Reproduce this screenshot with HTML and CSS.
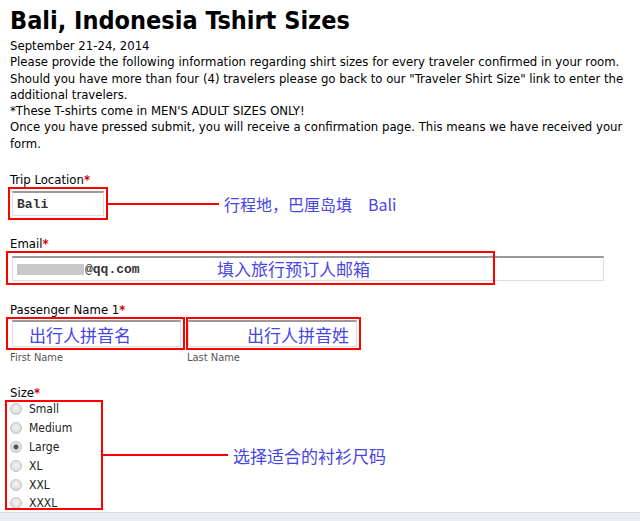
FILE: index.html
```html
<!DOCTYPE html>
<html lang="en">
<head>
  <meta charset="UTF-8">
  <title>Bali, Indonesia Tshirt Sizes</title>
  <link rel="stylesheet" href="styles.css">
</head>
<body>

  <div id="page">
    <h1>Bali, Indonesia Tshirt Sizes</h1>

    <div class="intro">
      September 21-24, 2014<br>
      Please provide the following information regarding shirt sizes for every traveler confirmed in your room.
      Should you have more than four (4) travelers please go back to our "Traveler Shirt Size" link to enter the
      additional travelers.<br>
      *These T-shirts come in MEN'S ADULT SIZES ONLY!<br>
      Once you have pressed submit, you will receive a confirmation page. This means we have received your
      form.
    </div>

    <div class="field trip">
      <label class="label">Trip Location<span class="req">*</span></label>
      <div class="row">
        <div class="mark"><input type="text" class="text short" value="Bali"></div>
        <span class="line"></span>
        <span class="note">行程地，巴厘岛填　Bali</span>
      </div>
    </div>

    <div class="field email">
      <label class="label">Email<span class="req">*</span></label>
      <div class="wide-wrap">
        <div class="text wide"><span class="blur"></span>@qq.com</div>
        <div class="mark-over"></div>
        <span class="note over-note">填入旅行预订人邮箱</span>
      </div>
    </div>

    <div class="field name">
      <label class="label">Passenger Name 1<span class="req">*</span></label>
      <div class="row names">
        <div class="name-col">
          <div class="mark first">
            <div class="text half"><span class="note">出行人拼音名</span></div>
          </div>
          <div class="sub">First Name</div>
        </div>
        <div class="name-col">
          <div class="mark last">
            <div class="text half"><span class="note indent">出行人拼音姓</span></div>
          </div>
          <div class="sub">Last Name</div>
        </div>
      </div>
    </div>

    <div class="field size">
      <label class="label">Size<span class="req">*</span></label>
      <div class="row">
        <div class="mark radios">
          <label class="opt"><input type="radio" name="size"> Small</label>
          <label class="opt"><input type="radio" name="size"> Medium</label>
          <label class="opt"><input type="radio" name="size" checked> Large</label>
          <label class="opt"><input type="radio" name="size"> XL</label>
          <label class="opt"><input type="radio" name="size"> XXL</label>
          <label class="opt"><input type="radio" name="size"> XXXL</label>
        </div>
        <span class="line long"></span>
        <span class="note">选择适合的衬衫尺码</span>
      </div>
    </div>
  </div>

  <div id="status-bar"></div>

</body>
</html>
```

FILE: styles.css
```css
body {
  margin: 0;
  font-family: "DejaVu Sans Condensed", "DejaVu Sans", sans-serif;
  font-size: 13px;
  color: #000;
  background: #fff;
}
#page {
  height: 512px;
  padding-left: 10px;
  overflow: hidden;
}
h1 {
  margin: 6px 0 2px;
  font-size: 25px;
  line-height: 30px;
  font-family: "DejaVu Sans Condensed", "DejaVu Sans", sans-serif;
}
.intro {
  line-height: 16.3px;
}
.field {
  margin-top: 20px;
}
.label {
  display: block;
  height: 15px;
  line-height: 15px;
}
.req {
  color: #c00;
  font-weight: bold;
}
.row {
  display: flex;
  align-items: center;
}
.mark {
  border: 2px solid #f00;
  padding: 2px;
}
.trip .mark {
  margin-left: -2px;
}
.text {
  box-sizing: border-box;
  height: 25px;
  border: 1px solid #dcdcdc;
  border-top: 2px solid #9a9a9a;
  background: #fff;
  font-family: "Liberation Mono", monospace;
  font-size: 13px;
  font-weight: bold;
  color: #333;
  padding: 0 4px;
}
.short {
  width: 92px;
}
.line {
  width: 111px;
  height: 2px;
  background: #f00;
}
.line.long {
  width: 125px;
}
.note {
  margin-left: 5px;
  font-family: "Noto Sans CJK SC", sans-serif;
  font-size: 16px;
  font-weight: normal;
  color: #4646e6;
  white-space: nowrap;
}
.email {
  margin-top: 16px;
}
.wide-wrap {
  position: relative;
  padding-top: 5px;
}
.wide {
  width: 592px;
  margin-left: 2px;
  display: flex;
  align-items: center;
}
.blur {
  display: inline-block;
  width: 67px;
  height: 11px;
  background: #c8c8c8;
  margin-right: 1px;
}
.mark-over {
  position: absolute;
  left: -4px;
  top: 0;
  width: 485px;
  height: 30px;
  border: 2px solid #f00;
}
.over-note {
  position: absolute;
  left: 202px;
  top: 5px;
  line-height: 25px;
  font-size: 17px;
}
.name {
  margin-top: 21px;
}
.names {
  align-items: flex-start;
  gap: 1px;
  margin-left: -4px;
}
.name-col .mark {
  padding: 1px 2px 1px 4px;
}
.half {
  width: 169px;
  height: 27px;
  display: flex;
  align-items: center;
}
.last .half {
  width: 169px;
  margin-left: -4px;
}
.half .note {
  margin-left: 12px;
  font-size: 17px;
}
.half .note.indent {
  margin-left: 54px;
}
.sub {
  margin-left: 4px;
  font-size: 11px;
  color: #555;
  line-height: 14px;
  padding-top: 1px;
}
.last + .sub {
  margin-left: 1px;
}
.size {
  margin-top: 20px;
}
.radios {
  margin-left: -5px;
  width: 94px;
  padding: 0;
  height: 106px;
  overflow: hidden;
}
.opt {
  display: flex;
  align-items: center;
  height: 18.8px;
  font-size: 12px;
  color: #222;
}
.opt:first-child {
  margin-top: -2px;
}
.opt input {
  appearance: none;
  width: 12px;
  height: 12px;
  margin: 0 7px 0 3px;
  border-radius: 50%;
  border: 1px solid #c4c4c4;
  background: radial-gradient(circle at 50% 40%, #f4f4f4, #d2d2d2);
}
.opt input:checked {
  background: radial-gradient(circle, #555 0 2px, #e6e6e6 3px, #d2d2d2);
}
.size .note {
  font-size: 17px;
}
#status-bar {
  height: 9px;
  border-top: 1px solid #d8dde3;
  background: #e9edf1;
}
```
